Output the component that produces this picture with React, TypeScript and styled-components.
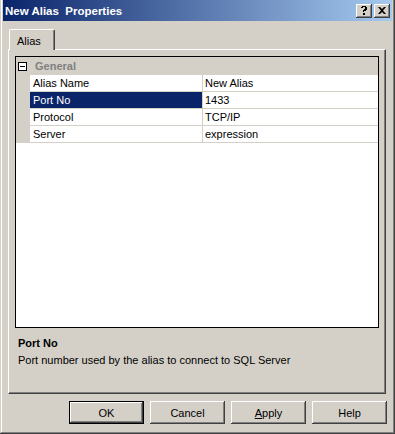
import styled, { createGlobalStyle, css } from "styled-components";

const GlobalStyle = createGlobalStyle`
  html, body {
    margin: 0;
    padding: 0;
    background: #d4d0c8;
  }
  * {
    box-sizing: border-box;
  }
`;

const raised = css`
  box-shadow: inset -1px -1px #404040, inset 1px 1px #ffffff,
    inset -2px -2px #808080, inset 2px 2px #d4d0c8;
`;

const Window = styled.div`
  width: 395px;
  height: 434px;
  background: #d4d0c8;
  display: flex;
  flex-direction: column;
  font-family: "Liberation Sans", Arial, sans-serif;
  font-size: 11px;
  color: #000;
  box-shadow: inset -1px -1px #404040, inset 1px 0 #d4d0c8,
    inset -2px -2px #808080, inset 2px 0 #ffffff;
`;

const TitleBar = styled.div`
  height: 21px;
  margin: 0 3px;
  padding: 0 2px 0 2px;
  display: flex;
  align-items: center;
  background: linear-gradient(to right, #0a246a, #a6caf0);
`;

const TitleText = styled.div`
  flex: 1;
  color: #fff;
  font-weight: bold;
  font-size: 11.5px;
  white-space: pre;
`;

const CaptionButton = styled.div`
  width: 16px;
  height: 14px;
  margin-left: 2px;
  background: #d4d0c8;
  display: flex;
  align-items: center;
  justify-content: center;
  font-weight: bold;
  font-size: 11px;
  ${raised}
  &:first-of-type {
    margin-left: 0;
  }
`;

const Body = styled.div`
  flex: 1;
  display: flex;
  flex-direction: column;
  padding: 8px 8px 0 8px;
`;

const TabStrip = styled.div`
  display: flex;
  height: 20px;
  padding-left: 1px;
`;

const Tab = styled.div`
  width: 46px;
  height: 21px;
  padding: 5px 0 0 7px;
  background: #d4d0c8;
  border-top: 1px solid #fff;
  border-left: 1px solid #fff;
  border-right: 1px solid #404040;
  border-radius: 2px 2px 0 0;
  box-shadow: inset -1px 0 #808080;
  position: relative;
  z-index: 1;
`;

const Panel = styled.div`
  width: 378px;
  height: 345px;
  display: flex;
  flex-direction: column;
  padding: 6px 6px 0 6px;
  border-top: 1px solid #fff;
  border-left: 1px solid #fff;
  border-right: 1px solid #404040;
  border-bottom: 1px solid #404040;
  box-shadow: inset -1px -1px #808080;
`;

const Grid = styled.div`
  height: 272px;
  border: 1px solid #000;
  background: #fff;
  display: flex;
  flex-direction: column;
`;

const CategoryRow = styled.div`
  height: 18px;
  background: #d4d0c8;
  display: flex;
  align-items: center;
`;

const Expander = styled.div`
  width: 9px;
  height: 9px;
  margin: 0 8px 0 2px;
  border: 1px solid #000;
  background: #fff;
  position: relative;
  &::after {
    content: "";
    position: absolute;
    left: 1px;
    top: 3px;
    width: 5px;
    height: 1px;
    background: #000;
  }
`;

const CategoryLabel = styled.span`
  font-weight: bold;
  color: #808080;
`;

const PropRow = styled.div`
  height: 17px;
  display: flex;
  padding-left: 14px;
  background: #d4d0c8;
`;

const Cell = styled.div<{ $selected?: boolean; $name?: boolean }>`
  height: 17px;
  display: flex;
  align-items: center;
  border-bottom: 1px solid #d4d0c8;
  padding-left: ${(p) => (p.$name ? "3px" : "2px")};
  width: ${(p) => (p.$name ? "173px" : "auto")};
  flex: ${(p) => (p.$name ? "none" : "1")};
  border-right: ${(p) => (p.$name ? "1px solid #d4d0c8" : "none")};
  background: ${(p) => (p.$selected ? "#0a246a" : "#fff")};
  color: ${(p) => (p.$selected ? "#fff" : "#000")};
  white-space: nowrap;
`;

const Description = styled.div`
  flex: 1;
  padding: 9px 3px 0 3px;
  display: flex;
  flex-direction: column;
  gap: 5px;
`;

const DescTitle = styled.div`
  font-weight: bold;
  font-size: 11px;
`;

const ButtonRow = styled.div`
  display: flex;
  justify-content: flex-end;
  gap: 6px;
  padding: 7px 0 0 0;
`;

const Button = styled.div<{ $default?: boolean }>`
  width: 75px;
  height: 23px;
  display: flex;
  align-items: center;
  justify-content: center;
  background: #d4d0c8;
  ${(p) =>
    p.$default
      ? css`
          border: 1px solid #000;
          box-shadow: inset -1px -1px #404040, inset 1px 1px #ffffff,
            inset -2px -2px #808080;
        `
      : raised}
  u {
    text-decoration: underline;
  }
`;

const props = [
  { name: "Alias Name", value: "New Alias" },
  { name: "Port No", value: "1433", selected: true },
  { name: "Protocol", value: "TCP/IP" },
  { name: "Server", value: "expression" },
];

const HelpGlyph = () => (
  <svg width="8" height="9" viewBox="0 0 8 9">
    <path d="M1 1h1V0h4v1h1v3H6v1H4v1H3V4h1V3h1V1H3v1H1z M3 7h2v2H3z" fill="#000" />
  </svg>
);

const CloseGlyph = () => (
  <svg width="8" height="7" viewBox="0 0 8 7">
    <path d="M0 0h2l2 2 2-2h2L5 3.5 8 7H6L4 5 2 7H0l3-3.5z" fill="#000" />
  </svg>
);

export default function App() {
  return (
    <>
      <GlobalStyle />
      <Window>
        <TitleBar>
          <TitleText>New Alias  Properties</TitleText>
          <CaptionButton>
            <HelpGlyph />
          </CaptionButton>
          <CaptionButton>
            <CloseGlyph />
          </CaptionButton>
        </TitleBar>
        <Body>
          <TabStrip>
            <Tab>Alias</Tab>
          </TabStrip>
          <Panel>
            <Grid>
              <CategoryRow>
                <Expander />
                <CategoryLabel>General</CategoryLabel>
              </CategoryRow>
              {props.map((p) => (
                <PropRow key={p.name}>
                  <Cell $name $selected={p.selected}>
                    {p.name}
                  </Cell>
                  <Cell>{p.value}</Cell>
                </PropRow>
              ))}
            </Grid>
            <Description>
              <DescTitle>Port No</DescTitle>
              <div>Port number used by the alias to connect to SQL Server</div>
            </Description>
          </Panel>
          <ButtonRow>
            <Button $default>OK</Button>
            <Button>Cancel</Button>
            <Button>
              <span>
                <u>A</u>pply
              </span>
            </Button>
            <Button>Help</Button>
          </ButtonRow>
        </Body>
      </Window>
    </>
  );
}
